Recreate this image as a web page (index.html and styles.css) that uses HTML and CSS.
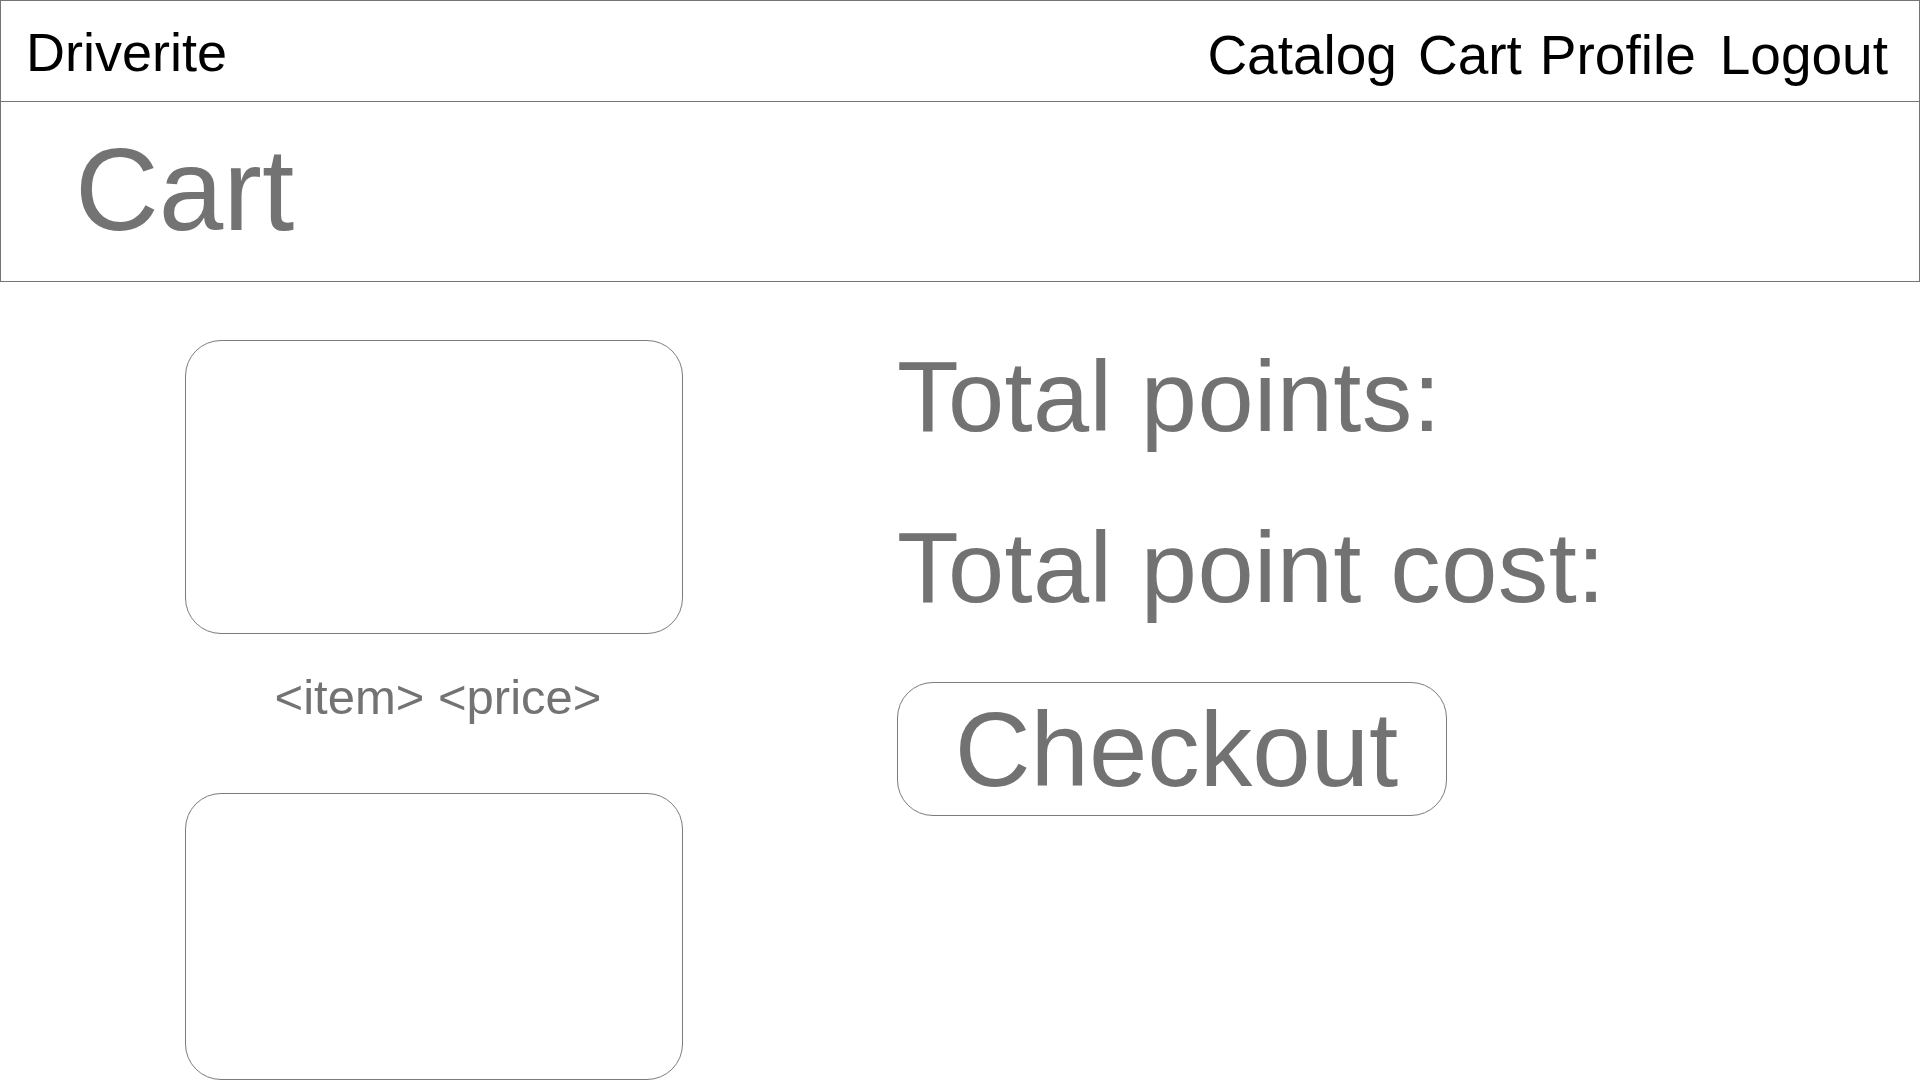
FILE: index.html
```html
<!DOCTYPE html>
<html lang="en">
<head>
<meta charset="utf-8">
<title>Driverite - Cart</title>
<link rel="stylesheet" href="styles.css">
</head>
<body>
  <header class="topbar">
    <div class="brand">Driverite</div>
    <nav class="nav">
      <a class="nav-link nav-catalog" href="#">Catalog</a>
      <a class="nav-link nav-cart" href="#">Cart</a>
      <a class="nav-link nav-profile" href="#">Profile</a>
      <a class="nav-link nav-logout" href="#">Logout</a>
    </nav>
  </header>
  <section class="titlebar">
    <h1 class="page-title">Cart</h1>
  </section>
  <main class="content">
    <div class="items">
      <div class="item-card"></div>
      <div class="item-label">&lt;item&gt; &lt;price&gt;</div>
      <div class="item-card item-card-second"></div>
    </div>
    <div class="summary">
      <div class="summary-line summary-points">Total points:</div>
      <div class="summary-line summary-cost">Total point cost:</div>
      <button class="checkout" type="button">Checkout</button>
    </div>
  </main>
</body>
</html>
```
FILE: styles.css
```css
* {
  box-sizing: border-box;
}

html,
body {
  margin: 0;
  padding: 0;
  background: #ffffff;
  overflow: hidden;
}

body {
  font-family: "Liberation Sans", Arial, sans-serif;
  color: #727272;
  width: 1920px;
  height: 1080px;
}

.topbar {
  height: 102px;
  border: 1px solid #747474;
  display: flex;
  justify-content: space-between;
  align-items: flex-start;
  padding: 24px 31px 0 25px;
}

.brand {
  font-size: 54px;
  line-height: 1;
  color: #000000;
}

.nav {
  display: flex;
  margin-top: 3px;
}

.nav-link {
  font-size: 55px;
  line-height: 1;
  color: #000000;
  text-decoration: none;
}

.nav-cart {
  margin-left: 21px;
}

.nav-profile {
  margin-left: 18px;
}

.nav-logout {
  margin-left: 24px;
}

.titlebar {
  height: 180px;
  border: 1px solid #747474;
  border-top: none;
  padding: 30px 0 0 74px;
}

.page-title {
  margin: 0;
  font-size: 116px;
  line-height: 1;
  font-weight: normal;
  color: #737373;
}

.content {
  display: flex;
  align-items: flex-start;
  padding: 58px 0 0 185px;
}

.items {
  width: 498px;
  display: flex;
  flex-direction: column;
  align-items: center;
}

.item-card {
  width: 498px;
  height: 294px;
  border: 1px solid #7c7c7c;
  border-radius: 36px;
}

.item-card-second {
  height: 287px;
  margin-top: 71px;
}

.item-label {
  margin-top: 39px;
  font-size: 49px;
  line-height: 1;
  color: #737373;
  padding-left: 8px;
}

.summary {
  margin-left: 214px;
  display: flex;
  flex-direction: column;
  align-items: flex-start;
}

.summary-line {
  font-size: 101px;
  letter-spacing: 0.4px;
  line-height: 1;
  color: #727272;
  white-space: nowrap;
}

.summary-points {
  margin-top: 6px;
}

.summary-cost {
  margin-top: 70px;
}

.checkout {
  margin-top: 64px;
  width: 550px;
  height: 134px;
  border: 1px solid #7c7c7c;
  border-radius: 36px;
  background: #ffffff;
  padding: 14px 0 14px 9px;
  font-family: "Liberation Sans", Arial, sans-serif;
  font-size: 105px;
  line-height: 1;
  color: #727272;
  text-align: center;
  cursor: pointer;
}
```
